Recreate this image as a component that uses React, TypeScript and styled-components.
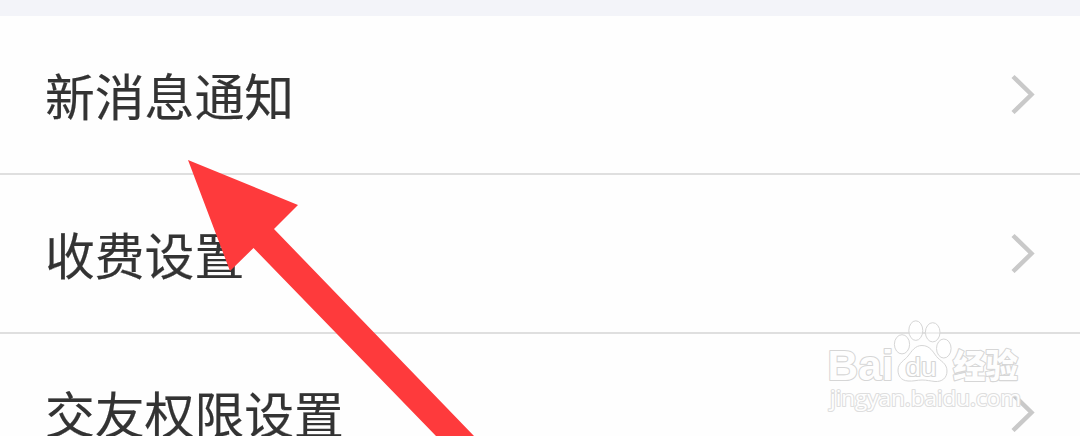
import React from 'react';
import styled, { createGlobalStyle } from 'styled-components';

const GlobalStyle = createGlobalStyle`
   * {
      box-sizing: border-box;
   }
   body {
      margin: 0;
      background: #fefefe;
      overflow: hidden;
   }
`;

const Page = styled.main`
   position: relative;
   width: 1080px;
   height: 436px;
   overflow: hidden;
   padding-top: 16px;
   background: #f3f4f9;
   font-family: "Noto Sans CJK SC", sans-serif;
`;

const List = styled.ul`
   margin: 0;
   padding: 0;
   list-style: none;
   background: #fefefe;
`;

const Row = styled.li`
   display: flex;
   justify-content: space-between;
   align-items: center;
   height: 159px;
   padding: 0 45px 2px 45px;
   border-bottom: 2px solid #dfdfdf;
`;

const Label = styled.span`
   font-size: 49.8px;
   line-height: 72px;
   color: #333333;
   padding-top: 1px;
   -webkit-text-stroke: 0.2px #333333;
`;

const Chevron = styled.svg`
   width: 24px;
   height: 40px;
   fill: none;
   stroke: #c9c9c9;
   stroke-width: 4.4;
`;

const Arrow = styled.svg`
   position: absolute;
   top: 0;
   left: 0;
   pointer-events: none;
   fill: #fe3a3c;
`;

const Watermark = styled.svg`
   position: absolute;
   left: 810px;
   top: 310px;
   pointer-events: none;
   fill: rgba(255, 255, 255, 0.5);
   stroke: #d6d6d6;
   stroke-width: 1;
   stroke-linejoin: round;

   text {
      paint-order: stroke;
      stroke-width: 2.2;
      fill: #fefefe;
   }
   .brand {
      font: bold 43px "Liberation Sans", Arial, sans-serif;
   }
   .paw {
      font: 25px "Liberation Sans", Arial, sans-serif;
   }
   .cn {
      font: 900 33px "Noto Sans CJK SC", sans-serif;
   }
   .site {
      font: 22px "Open Sans", "Noto Sans", sans-serif;
      stroke: #dedede;
   }
`;

const items = ['新消息通知', '收费设置', '交友权限设置'];

const SettingRow = ({ name }: { name: string }) => (
   <Row>
      <Label>{name}</Label>
      <Chevron viewBox="0 0 24 40">
         <path d="M2 2.5 L20.5 20.5 L2 38.5" />
      </Chevron>
   </Row>
);

const App = () => {
   return (
      <>
         <GlobalStyle />
         <Page>
            <List>
               {items.map((name) => (
                  <SettingRow key={name} name={name} />
               ))}
            </List>
            <Arrow width="1080" height="436">
               <polygon points="188,160 298,205 274,229 474,436 436,436 253.5,248 230,271" />
            </Arrow>
            <Watermark width="240" height="126">
               <text className="brand" x="17.5" y="70" textLength="66" lengthAdjust="spacingAndGlyphs">Bai</text>
               <ellipse cx="92" cy="34.3" rx="7.6" ry="9.6" />
               <ellipse cx="105.8" cy="20.6" rx="7" ry="9.8" />
               <ellipse cx="122.7" cy="22.3" rx="7.3" ry="9.6" />
               <ellipse cx="133.8" cy="38.5" rx="7.3" ry="9.5" />
               <path d="M112 35.5 C120 35.5 123 42 126.5 46.5 C130 51 137 53 137 61 C137 68 132 72 125 71.5 C120 71 117 70 112 70 C107 70 103 71.5 98 71 C91 70.5 88 66 88 60 C88 53 95 50 98 46 C102 41 105 35.5 112 35.5 Z" />
               <text className="paw" x="95.5" y="65.5" textLength="31" lengthAdjust="spacingAndGlyphs">du</text>
               <text className="cn" x="143" y="67.5" textLength="65" lengthAdjust="spacingAndGlyphs">经验</text>
               <text className="site" x="20" y="96" textLength="191" lengthAdjust="spacingAndGlyphs">jingyan.baidu.com</text>
            </Watermark>
         </Page>
      </>
   );
};

export default App;
